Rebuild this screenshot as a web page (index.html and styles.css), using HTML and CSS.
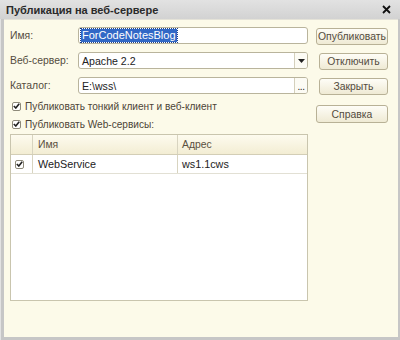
FILE: index.html
```html
<!DOCTYPE html>
<html>
<head>
<meta charset="utf-8">
<link rel="stylesheet" href="styles.css">
</head>
<body>
<div class="window">
  <div class="titlebar">
    <span class="title">Публикация на веб-сервере</span>
    <svg class="close" width="9" height="9" viewBox="0 0 9 9"><path d="M1 1 L8 8 M8 1 L1 8" stroke="#111" stroke-width="1.8"/></svg>
  </div>
  <div class="content">
    <div class="main">
      <div class="form">
        <span class="label">Имя:</span>
        <div class="field"><span class="sel">ForCodeNotesBlog</span></div>
        <span class="label">Веб-сервер:</span>
        <div class="field"><span class="val">Apache 2.2</span><span class="fbtn"><svg width="7" height="4" viewBox="0 0 7 4"><path d="M0 0 H7 L3.5 4 Z" fill="#222"/></svg></span></div>
        <span class="label">Каталог:</span>
        <div class="field"><span class="val">E:\wss\</span><span class="fbtn dots">...</span></div>
      </div>
      <div class="check first">
        <span class="cb"><svg width="7" height="6" viewBox="0 0 7 6"><path d="M0.8 3 L2.8 5 L6.2 0.8" stroke="#222" stroke-width="1.6" fill="none"/></svg></span>
        <span>Публиковать тонкий клиент и веб-клиент</span>
      </div>
      <div class="check">
        <span class="cb"><svg width="7" height="6" viewBox="0 0 7 6"><path d="M0.8 3 L2.8 5 L6.2 0.8" stroke="#222" stroke-width="1.6" fill="none"/></svg></span>
        <span>Публиковать Web-сервисы:</span>
      </div>
      <div class="table">
        <div class="row head">
          <div class="c c0"></div>
          <div class="c c1">Имя</div>
          <div class="c c2">Адрес</div>
        </div>
        <div class="row data">
          <div class="c c0"><span class="cb"><svg width="7" height="6" viewBox="0 0 7 6"><path d="M0.8 3 L2.8 5 L6.2 0.8" stroke="#222" stroke-width="1.6" fill="none"/></svg></span></div>
          <div class="c c1">WebService</div>
          <div class="c c2">ws1.1cws</div>
        </div>
      </div>
    </div>
    <div class="buttons">
      <span class="btn wide">Опубликовать</span>
      <span class="btn">Отключить</span>
      <span class="btn">Закрыть</span>
      <span class="btn wide help">Справка</span>
    </div>
  </div>
</div>
</body>
</html>
```
FILE: styles.css
```css
html, body {
  margin: 0;
  padding: 0;
}
body {
  width: 400px;
  height: 340px;
  font-family: "Liberation Sans", Arial, sans-serif;
  font-size: 10.4px;
  color: #4a4438;
}
.window {
  width: 400px;
  height: 340px;
  box-sizing: border-box;
  background: #c6c6c6;
  display: flex;
  flex-direction: column;
  padding: 0 2px 3px 3px;
  border-left: 1px solid #e2e2e2;
}
.titlebar {
  height: 19px;
  margin: 0 -2px 0 -4px;
  padding: 0 9px 0 6px;
  background: linear-gradient(#e2e2e2, #d2d2d2);
  display: flex;
  align-items: center;
  justify-content: space-between;
}
.title {
  font-weight: bold;
  color: #2a2a2a;
  font-size: 11px;
}
.content {
  flex: 1;
  background: #fcfae9;
  display: flex;
  padding: 7px 0 0 6px;
  border-top: 1px solid #e4e2d8;
}
.main {
  width: 298px;
  display: flex;
  flex-direction: column;
}
.form {
  display: grid;
  grid-template-columns: 68px 230px;
  grid-auto-rows: 17px;
  row-gap: 8px;
  align-items: center;
}
.label {
  color: #544c3e;
}
.field {
  height: 17px;
  box-sizing: border-box;
  border: 1px solid #b9b49c;
  border-radius: 3px;
  background: #fff;
  display: flex;
  align-items: center;
  color: #222;
  font-size: 10.6px;
}
.sel {
  margin-left: 2px;
  background: #3168c6;
  color: #fff;
  padding: 0 1px;
  line-height: 13px;
  font-size: 11px;
  outline: 1px dotted #1b3f8a;
}
.val {
  flex: 1;
  padding-left: 3px;
}
.fbtn {
  width: 12px;
  height: 15px;
  border-left: 1px solid #d4d0bc;
  display: flex;
  align-items: center;
  justify-content: center;
  background: #fcfbf4;
  border-radius: 0 2px 2px 0;
}
.fbtn.dots {
  align-items: flex-end;
  font-size: 10px;
  line-height: 12px;
  color: #222;
  letter-spacing: -0.5px;
}
.check {
  height: 18px;
  display: flex;
  align-items: center;
  gap: 4px;
  padding-left: 2px;
  color: #4c4436;
  font-size: 10.1px;
}
.check.first {
  margin-top: 3px;
}
.cb {
  width: 9px;
  height: 9px;
  box-sizing: border-box;
  border: 1px solid #8e8a7a;
  border-radius: 2px;
  background: #fff;
  display: flex;
  align-items: center;
  justify-content: center;
}
.table {
  margin-top: 1px;
  height: 167px;
  box-sizing: border-box;
  border: 1px solid #c9c5ae;
  background: #fff;
}
.row {
  display: flex;
}
.row.head {
  height: 19px;
  background: linear-gradient(#fdfbef, #f3edd3);
  border-bottom: 1px solid #d3ceb6;
  color: #5a5040;
}
.row.data {
  height: 18px;
  border-bottom: 1px solid #e2e0d4;
  color: #222;
  font-size: 10.8px;
}
.c {
  display: flex;
  align-items: center;
  box-sizing: border-box;
  padding-left: 5px;
}
.c0 {
  width: 22px;
  padding-left: 4px;
  border-right: 1px solid #d8d4c0;
}
.c1 {
  width: 145px;
  border-right: 1px solid #d8d4c0;
}
.c2 {
  flex: 1;
  padding-left: 4px;
}
.buttons {
  margin-left: 8px;
  padding-top: 1px;
  display: flex;
  flex-direction: column;
  gap: 8px;
  width: 72px;
}
.btn {
  height: 17px;
  box-sizing: border-box;
  border: 1px solid #b8b196;
  border-radius: 3px;
  background: linear-gradient(#fefdf7, #efead4);
  display: flex;
  align-items: center;
  justify-content: center;
  color: #544c3e;
  margin-left: 3px;
}
.btn.wide {
  margin-left: 0;
}
.btn.help {
  margin-top: 2px;
  height: 18px;
}
```
